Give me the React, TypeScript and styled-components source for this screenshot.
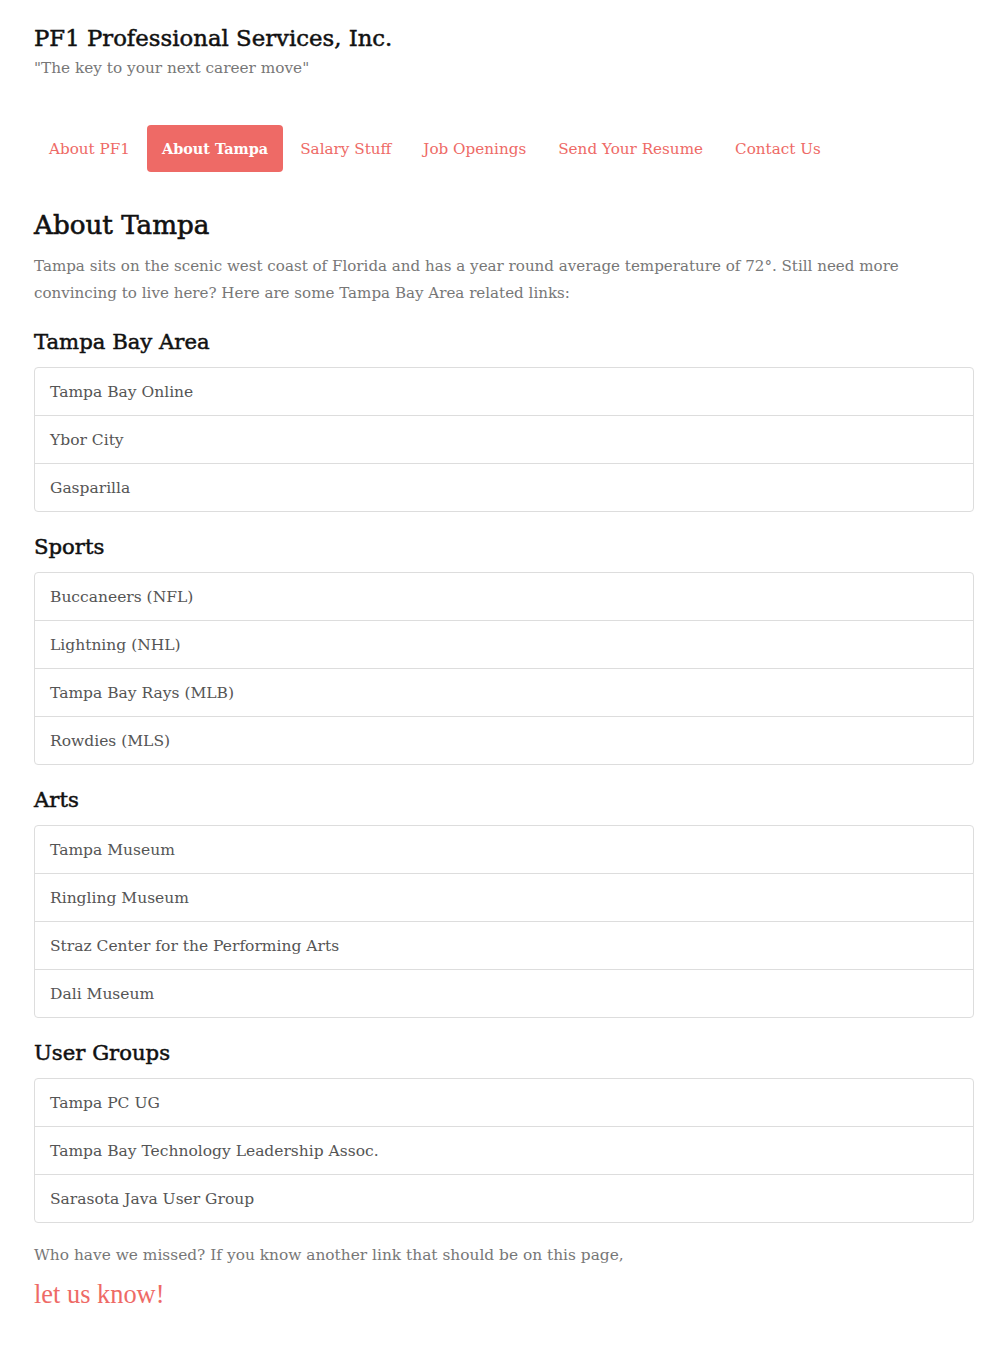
import React from 'react'
import styled, { createGlobalStyle } from 'styled-components'

const GlobalStyle = createGlobalStyle`
  html, body {
    margin: 0;
    padding: 0;
    background: #fff;
  }
  body {
    font-family: "DejaVu Serif", Georgia, serif;
  }
`

const navItems = ['About PF1', 'About Tampa', 'Salary Stuff', 'Job Openings', 'Send Your Resume', 'Contact Us']

const sections: { title: string; links: string[] }[] = [
  { title: 'Tampa Bay Area', links: ['Tampa Bay Online', 'Ybor City', 'Gasparilla'] },
  { title: 'Sports', links: ['Buccaneers (NFL)', 'Lightning (NHL)', 'Tampa Bay Rays (MLB)', 'Rowdies (MLS)'] },
  {
    title: 'Arts',
    links: ['Tampa Museum', 'Ringling Museum', 'Straz Center for the Performing Arts', 'Dali Museum'],
  },
  {
    title: 'User Groups',
    links: ['Tampa PC UG', 'Tampa Bay Technology Leadership Assoc.', 'Sarasota Java User Group'],
  },
]

const App: React.FC = () => {
  return (
    <>
      <GlobalStyle />
      <StyledContainer>
        <StyledBrand>PF1 Professional Services, Inc.</StyledBrand>
        <StyledTagline>"The key to your next career move"</StyledTagline>

        <StyledNav>
          {navItems.map((item) => (
            <StyledPill key={item} $active={item === 'About Tampa'}>
              {item}
            </StyledPill>
          ))}
        </StyledNav>

        <StyledTitle>About Tampa</StyledTitle>
        <StyledLead>
          Tampa sits on the scenic west coast of Florida and has a year round average temperature of 72°. Still
          need more convincing to live here? Here are some Tampa Bay Area related links:
        </StyledLead>

        {sections.map((section) => (
          <React.Fragment key={section.title}>
            <StyledSectionTitle>{section.title}</StyledSectionTitle>
            <StyledListGroup>
              {section.links.map((link) => (
                <StyledListItem key={link}>{link}</StyledListItem>
              ))}
            </StyledListGroup>
          </React.Fragment>
        ))}

        <StyledFooterText>Who have we missed? If you know another link that should be on this page,</StyledFooterText>
        <StyledLetUsKnow>let us know!</StyledLetUsKnow>
      </StyledContainer>
    </>
  )
}

const StyledContainer = styled.div`
  width: 940px;
  margin: 0 auto;
  padding: 23px 0 40px;
`
const StyledBrand = styled.h1`
  margin: 0;
  font-family: "DejaVu Serif", serif;
  font-weight: normal;
  font-size: 22.8px;
  line-height: 30px;
  color: #111;
  -webkit-text-stroke: 0.5px #111;
`
const StyledTagline = styled.p`
  margin: 4px 0 0;
  font-size: 15.3px;
  line-height: 22px;
  color: #777;
`
const StyledNav = styled.nav`
  display: flex;
  gap: 2px;
  margin-top: 46px;
  height: 47px;
`
const StyledPill = styled.a<{ $active?: boolean }>`
  display: flex;
  align-items: center;
  padding: 0 15px;
  border-radius: 4px;
  font-size: ${(p) => (p.$active ? '14.4px' : '15.2px')};
  color: ${(p) => (p.$active ? '#fff' : '#ee6a66')};
  background: ${(p) => (p.$active ? '#ee6a66' : 'transparent')};
  font-weight: ${(p) => (p.$active ? 'bold' : 'normal')};
  cursor: pointer;
`
const StyledTitle = styled.h2`
  margin: 36px 0 11px;
  font-family: "DejaVu Serif", serif;
  font-weight: normal;
  font-size: 26.2px;
  line-height: 34px;
  color: #111;
  -webkit-text-stroke: 0.6px #111;
`
const StyledLead = styled.p`
  margin: 0;
  font-size: 15.1px;
  line-height: 27px;
  color: #777;
`
const StyledSectionTitle = styled.h3`
  margin: 23px 0 13px;
  font-family: "DejaVu Serif", serif;
  font-weight: normal;
  font-size: 21.2px;
  line-height: 24px;
  color: #111;
  -webkit-text-stroke: 0.5px #111;
`
const StyledListGroup = styled.div`
  border: 1px solid #ddd;
  border-radius: 4px;
`
const StyledListItem = styled.a`
  display: flex;
  align-items: center;
  height: 47px;
  padding: 0 15px;
  font-size: 15.5px;
  color: #555;
  & + & {
    border-top: 1px solid #ddd;
  }
`
const StyledFooterText = styled.p`
  margin: 20px 0 0;
  font-size: 15.4px;
  line-height: 24px;
  color: #777;
`
const StyledLetUsKnow = styled.a`
  display: block;
  margin-top: 12px;
  font-family: "Liberation Serif", "Times New Roman", serif;
  font-size: 26.4px;
  line-height: 30px;
  color: #ee6a66;
  cursor: pointer;
`

export default App
